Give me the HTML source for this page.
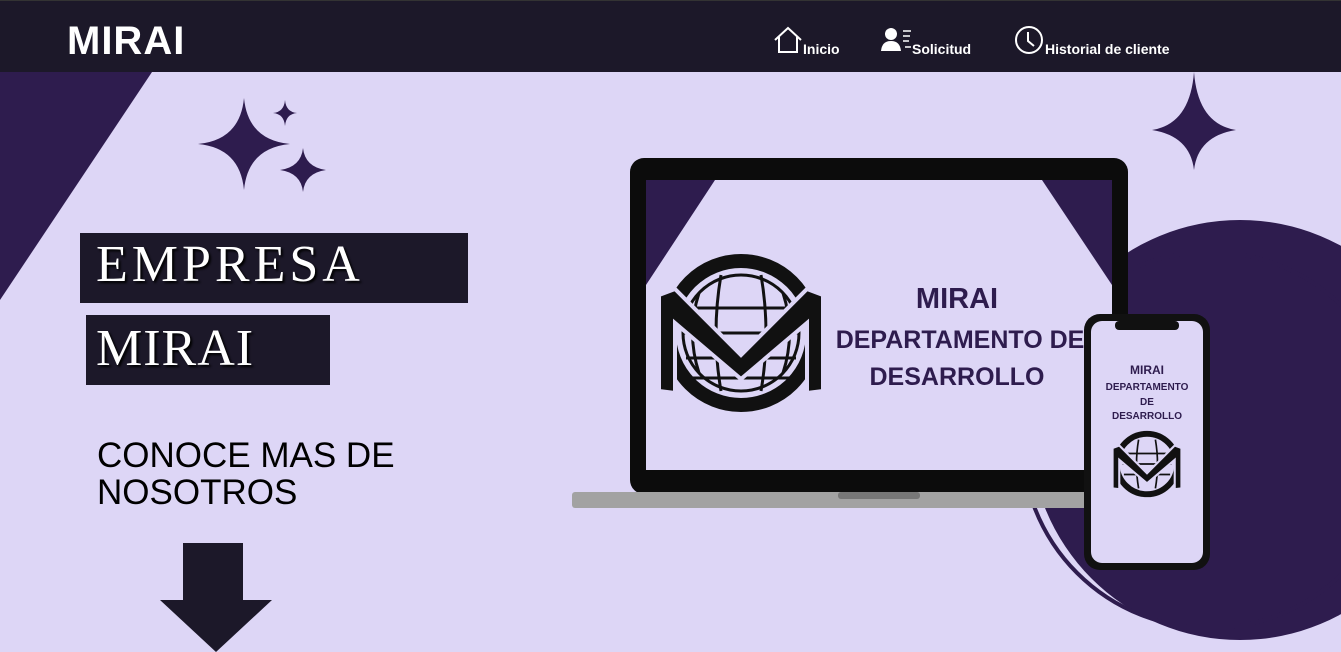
<!DOCTYPE html>
<html><head><meta charset="utf-8"><style>
*{margin:0;padding:0;box-sizing:border-box}
body{width:1341px;height:652px;overflow:hidden;background:#ddd6f6;font-family:"Liberation Sans",sans-serif;position:relative}
.hdr{position:absolute;left:0;top:0;width:1341px;height:72px;background:#1c1829;border-top:1px solid #333}
.logo{position:absolute;left:67px;top:18px;color:#fff;font-size:40px;font-weight:bold;letter-spacing:1px}
.nav{position:absolute;top:24px;color:#fff;font-weight:bold;font-size:14px}
.box{position:absolute;background:#1c1829;color:#fff;font-family:"Liberation Serif",serif;font-size:52px;letter-spacing:1px;text-shadow:2px 2px 2px #000}
.k{position:absolute;left:97px;top:437px;font-size:35px;line-height:37px;color:#000}
</style></head><body>
<svg width="1341" height="652" style="position:absolute;left:0;top:0">
<polygon points="0,72 152,72 0,300" fill="#2e1c4e"/>
<circle cx="1240" cy="430" r="210" fill="#2e1c4e"/>
<circle cx="1210" cy="440" r="188" fill="none" stroke="#2e1c4e" stroke-width="4"/>
<path d="M244,98 Q248,140 290,144 Q248,148 244,190 Q240,148 198,144 Q240,140 244,98Z" fill="#2e1c4e"/>
<path d="M285,100 Q286,112 297,113 Q286,114 285,126 Q284,114 273,113 Q284,112 285,100Z" fill="#2e1c4e"/>
<path d="M303,148 Q305,167 326,170 Q305,173 303,192 Q301,173 280,170 Q301,167 303,148Z" fill="#2e1c4e"/>
<path d="M1194,72 Q1198,124 1236,130 Q1198,136 1194,170 Q1190,136 1152,130 Q1190,124 1194,72Z" fill="#2e1c4e"/>
<polygon points="183,543 243,543 243,600 272,600 216,652 160,600 183,600" fill="#1c1829"/>
<rect x="630" y="158" width="498" height="336" rx="14" fill="#0c0c0c"/>
<rect x="646" y="180" width="466" height="290" fill="#ddd6f6"/>
<polygon points="646,180 715,180 646,285" fill="#2e1c4e"/>
<polygon points="1042,180 1112,180 1112,285" fill="#2e1c4e"/>
<rect x="572" y="492" width="528" height="16" rx="3" fill="#a2a2a2"/>
<rect x="838" y="492" width="82" height="7" rx="3" fill="#777"/>
<g transform="translate(741,333)">
<circle r="72" fill="none" stroke="#111" stroke-width="14"/>
<circle r="58" fill="none" stroke="#111" stroke-width="3"/>
<path d="M-55,-25 L55,-25 M-58,0 L58,0 M-55,25 L55,25 M-50,45 L50,45 M-20,-58 Q-30,0 -20,58 M20,-58 Q30,0 20,58 M-42,-40 Q-55,0 -42,40 M42,-40 Q55,0 42,40" stroke="#111" stroke-width="3" fill="none"/>
<polygon points="-82,-38 -66,-44 0,22 66,-44 82,-38 82,58 66,60 66,-10 0,46 -66,-10 -66,60 -82,58" fill="#111" stroke="#ddd6f6" stroke-width="4"/>
</g>
<text x="957" y="308" font-size="29" font-weight="bold" fill="#2e1c4e" text-anchor="middle" font-family="Liberation Sans">MIRAI</text>
<text x="960" y="348" font-size="25" font-weight="bold" fill="#2e1c4e" text-anchor="middle" font-family="Liberation Sans">DEPARTAMENTO DE</text>
<text x="957" y="385" font-size="25" font-weight="bold" fill="#2e1c4e" text-anchor="middle" font-family="Liberation Sans">DESARROLLO</text>
<rect x="1084" y="314" width="126" height="256" rx="16" fill="#111"/>
<rect x="1091" y="321" width="112" height="242" rx="11" fill="#ddd6f6"/>
<rect x="1115" y="321" width="64" height="9" rx="4" fill="#111"/>
<text x="1147" y="374" font-size="12" font-weight="bold" fill="#2e1c4e" text-anchor="middle">MIRAI</text>
<text x="1147" y="390" font-size="10" font-weight="bold" fill="#2e1c4e" text-anchor="middle">DEPARTAMENTO</text>
<text x="1147" y="405" font-size="10" font-weight="bold" fill="#2e1c4e" text-anchor="middle">DE</text>
<text x="1147" y="419" font-size="10" font-weight="bold" fill="#2e1c4e" text-anchor="middle">DESARROLLO</text>
<g transform="translate(1147,464) scale(0.42)">
<circle r="72" fill="none" stroke="#111" stroke-width="14"/>
<path d="M-55,-25 L55,-25 M-58,0 L58,0 M-55,25 L55,25 M-20,-58 Q-30,0 -20,58 M20,-58 Q30,0 20,58" stroke="#111" stroke-width="4" fill="none"/>
<polygon points="-82,-38 -66,-44 0,22 66,-44 82,-38 82,58 66,60 66,-10 0,46 -66,-10 -66,60 -82,58" fill="#111" stroke="#ddd6f6" stroke-width="5"/>
</g>
</svg>
<div class="hdr">
<div class="logo">MIRAI</div>
<svg style="position:absolute;left:773px;top:25px" width="30" height="28"><path d="M2,14 L15,2 L28,14 M6,11 V26 H24 V11" stroke="#fff" stroke-width="2" fill="none"/></svg>
<div class="nav" style="left:803px;top:40px">Inicio</div>
<svg style="position:absolute;left:881px;top:26px" width="32" height="26"><circle cx="10" cy="7" r="6" fill="#fff"/><path d="M0,24 Q1,14 10,14 Q19,14 20,24Z" fill="#fff"/><path d="M22,4h8M22,9h7M22,14h6M24,20h6" stroke="#fff" stroke-width="1.5"/></svg>
<div class="nav" style="left:912px;top:40px">Solicitud</div>
<svg style="position:absolute;left:1014px;top:24px" width="30" height="30"><circle cx="15" cy="15" r="13" stroke="#fff" stroke-width="2" fill="none"/><path d="M14,7 V16 L20,21" stroke="#fff" stroke-width="2" fill="none"/></svg>
<div class="nav" style="left:1045px;top:40px">Historial de cliente</div>
</div>
<div class="box" style="left:80px;top:233px;width:388px;height:70px;padding:2px 0 0 16px;letter-spacing:4px">EMPRESA</div>
<div class="box" style="left:86px;top:315px;width:244px;height:70px;padding:4px 0 0 10px">MIRAI</div>
<div class="k">CONOCE MAS DE<br>NOSOTROS</div>
</body></html>
